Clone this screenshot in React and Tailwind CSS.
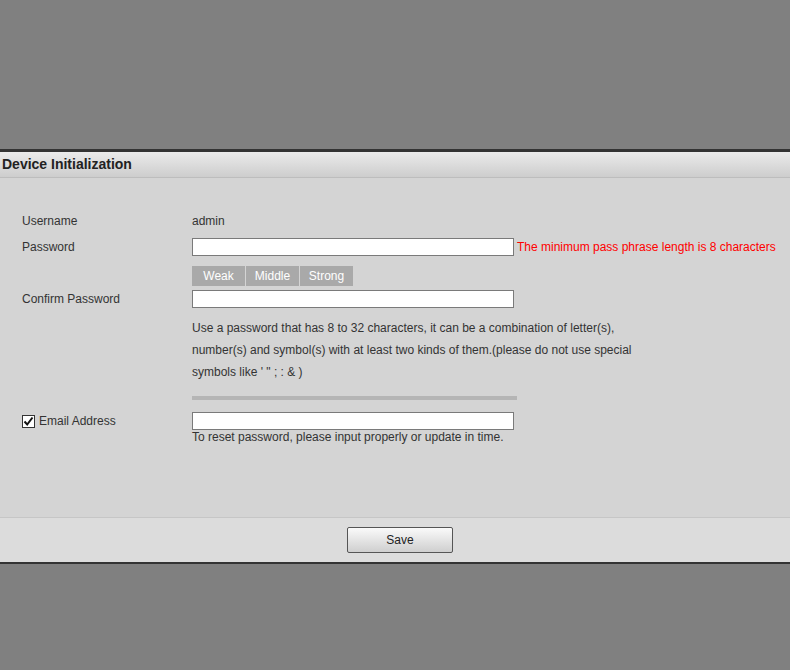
import React, { useState } from 'react';

const FONT = { fontFamily: '"Liberation Sans", Arial, sans-serif' };

function Field({ label, children, labelClass = '' }) {
  return (
    <div className="flex items-center h-[18px]">
      <div className={`w-[170px] shrink-0 leading-[20px] ${labelClass}`}>{label}</div>
      {children}
    </div>
  );
}

function TextBox() {
  return <input type="text" className="w-[322px] h-[18px] bg-white border border-[#7a7a7a] outline-none px-1 text-[12px]" />;
}

export default function App() {
  const [useEmail, setUseEmail] = useState(true);

  return (
    <div className="w-full h-[670px] flex flex-col bg-[#808080] text-[12px] text-[#333]" style={FONT}>
      <div className="h-[149px] shrink-0" />

      {/* dialog */}
      <div className="shrink-0 border-t-[3px] border-b-[2px] border-[#333] flex flex-col">
        <div className="h-[26px] flex items-center px-[2px] bg-gradient-to-b from-[#ebebeb] to-[#cdcdcd] border-b border-[#bdbdbd]">
          <span className="text-[14px] font-bold text-[#222]">Device Initialization</span>
        </div>

        <div className="h-[339px] bg-[#d4d4d4] pt-[34px] pl-[22px]">
          <Field label="Username">
            <span className="leading-[20px]">admin</span>
          </Field>

          <div className="mt-[8px]">
            <Field label="Password">
              <TextBox />
              <span className="ml-[3px] leading-[20px] text-[#f00]">The minimum pass phrase length is 8 characters</span>
            </Field>
          </div>

          <div className="mt-[10px] ml-[170px] flex h-[20px] text-white">
            <div className="w-[53px] bg-[#a9a9a9] flex items-center justify-center">Weak</div>
            <div className="w-[53px] ml-px bg-[#a9a9a9] flex items-center justify-center">Middle</div>
            <div className="w-[53px] ml-px bg-[#a9a9a9] flex items-center justify-center">Strong</div>
          </div>

          <div className="mt-[4px]">
            <Field label="Confirm Password">
              <TextBox />
            </Field>
          </div>

          <p className="mt-[9px] ml-[170px] leading-[22px]">
            Use a password that has 8 to 32 characters, it can be a combination of letter(s),
            <br />
            number(s) and symbol(s) with at least two kinds of them.(please do not use special
            <br />
            symbols like ' " ; : &amp; )
          </p>

          <div className="mt-[13px] ml-[170px] w-[325px] h-[4px] bg-[#b5b5b5]" />

          <div className="mt-[12px]">
            <Field
              labelClass="flex items-center"
              label={
                <label className="flex items-center cursor-pointer" onClick={() => setUseEmail(v => !v)}>
                  <span className="w-[13px] h-[13px] bg-white border border-[#333] flex items-center justify-center">
                    {useEmail && (
                      <svg width="11" height="11" viewBox="0 0 11 11">
                        <path d="M1.5 5.5 L4.2 8.5 L9.5 1.5" fill="none" stroke="#111" strokeWidth="2" />
                      </svg>
                    )}
                  </span>
                  <span className="ml-[4px]">Email Address</span>
                </label>
              }
            >
              <TextBox />
            </Field>
            <div className="ml-[170px] leading-[14px]">To reset password, please input properly or update in time.</div>
          </div>
        </div>

        <div className="h-[45px] bg-[#dcdcdc] border-t border-[#c6c6c6] flex items-center justify-center pl-[10px]">
          <button className="w-[106px] h-[26px] rounded-[2px] border border-[#555] bg-gradient-to-b from-[#fafafa] to-[#cfcfcf] text-[12px] text-[#222]">
            Save
          </button>
        </div>
      </div>

      <div className="flex-1" />
    </div>
  );
}
